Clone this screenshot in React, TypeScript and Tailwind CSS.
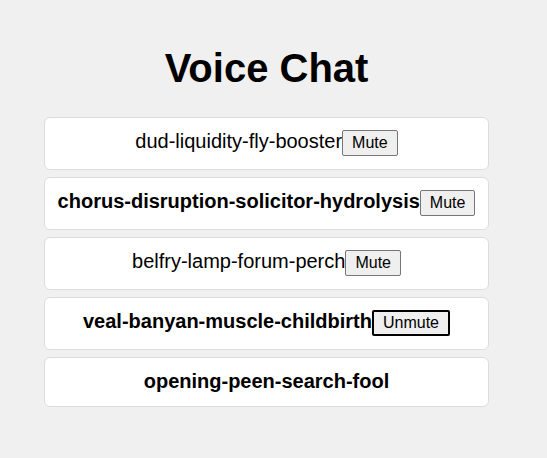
import React from 'react';

type Peer = { name: string; speaking: boolean; action?: 'Mute' | 'Unmute' };

const peers: Peer[] = [
  { name: 'dud-liquidity-fly-booster', speaking: false, action: 'Mute' },
  { name: 'chorus-disruption-solicitor-hydrolysis', speaking: true, action: 'Mute' },
  { name: 'belfry-lamp-forum-perch', speaking: false, action: 'Mute' },
  { name: 'veal-banyan-muscle-childbirth', speaking: true, action: 'Unmute' },
  { name: 'opening-peen-search-fool', speaking: true },
];

export default function App() {
  return (
    <div className="min-h-screen bg-[#f0f0f0] pt-[18px] pl-[44px] font-['Liberation_Sans',Arial,sans-serif] text-black">
      <div className="w-[445px]">
        <h1 className="mt-[27px] mb-[26px] text-center text-[40px] leading-[46px] font-bold">Voice Chat</h1>
        <div className="flex flex-col gap-[7px]">
          {peers.map((p) => (
            <div
              key={p.name}
              className="rounded-[6px] border border-[#dddddd] bg-white px-3 pt-3 pb-[13px] text-center text-[20px] leading-[23px]"
            >
              <span className={p.speaking ? 'font-bold' : ''}>{p.name}</span>
              {p.action && (
                <button
                  className={`inline-block h-[26px] rounded-[2px] bg-[#efefef] px-[9px] text-[16px] leading-[18px] align-baseline ${
                    p.action === 'Unmute' ? 'border-2 border-black' : 'border border-[#767676]'
                  }`}
                >
                  {p.action}
                </button>
              )}
            </div>
          ))}
        </div>
      </div>
    </div>
  );
}
